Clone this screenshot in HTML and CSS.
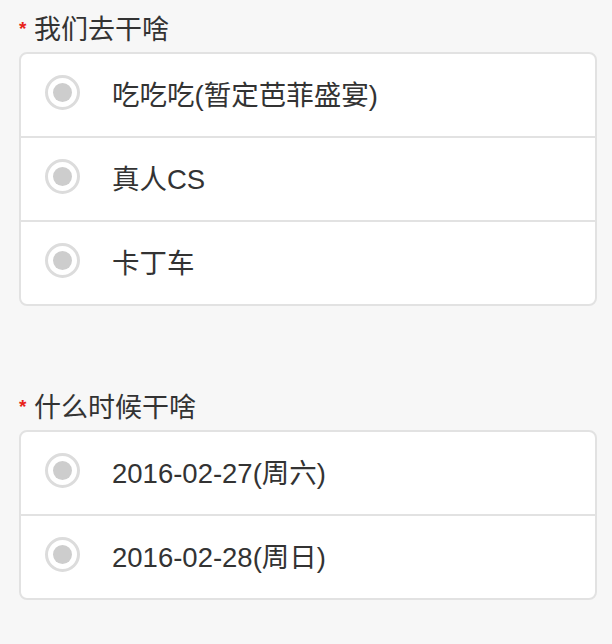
FILE: index.html
```html
<!DOCTYPE html>
<html lang="zh-CN">
<head>
<meta charset="utf-8">
<title>活动投票</title>
<link rel="stylesheet" href="styles.css">
</head>
<body>
<div class="form">
  <section class="field">
    <div class="label"><span class="req">*</span>我们去干啥</div>
    <div class="card">
      <label class="row"><span class="radio"></span><span class="text">吃吃吃(暂定芭菲盛宴)</span></label>
      <label class="row"><span class="radio"></span><span class="text">真人CS</span></label>
      <label class="row"><span class="radio"></span><span class="text">卡丁车</span></label>
    </div>
  </section>
  <section class="field field-second">
    <div class="label"><span class="req">*</span>什么时候干啥</div>
    <div class="card">
      <label class="row"><span class="radio"></span><span class="text">2016-02-27(周六)</span></label>
      <label class="row"><span class="radio"></span><span class="text">2016-02-28(周日)</span></label>
    </div>
  </section>
</div>
</body>
</html>
```
FILE: styles.css
```css
html, body {
  margin: 0;
  padding: 0;
  background: #f7f7f7;
}
body {
  font-family: "Liberation Sans", "Noto Sans CJK SC", sans-serif;
  color: #333;
}
.form {
  padding: 12px 15px 0 19px;
}
.field-second {
  margin-top: 84px;
}
.label {
  font-size: 27px;
  line-height: 36px;
  height: 36px;
  display: flex;
  align-items: flex-start;
  color: #333;
}
.req {
  color: #e8231a;
  font-size: 19px;
  line-height: 28px;
  margin-top: 3px;
  width: 15px;
  font-weight: bold;
}
.card {
  margin-top: 4px;
  background: #fff;
  border: 2px solid #e2e2e2;
  border-radius: 8px;
}
.row {
  display: flex;
  align-items: center;
  height: 82px;
  padding-left: 24px;
}
.row + .row {
  border-top: 2px solid #e2e2e2;
}
.radio {
  box-sizing: border-box;
  width: 35px;
  height: 35px;
  border: 3px solid #dcdcdc;
  border-radius: 50%;
  display: flex;
  align-items: center;
  justify-content: center;
  margin-top: -6px;
  flex: none;
}
.radio::after {
  content: "";
  width: 19px;
  height: 19px;
  border-radius: 50%;
  background: #cdcdcd;
}
.text {
  margin-left: 32px;
  font-size: 27.5px;
  line-height: 36px;
  margin-top: 2px;
  color: #333;
}
```
